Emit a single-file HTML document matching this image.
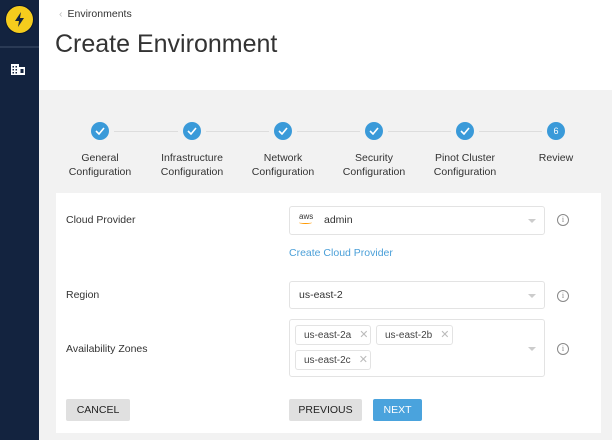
<!DOCTYPE html><html><head><style>
*{box-sizing:border-box;margin:0;padding:0}
body{width:612px;height:440px;overflow:hidden;font-family:"Liberation Sans",sans-serif;background:#f2f2f2;position:relative;color:#222}
.sb{position:absolute;left:0;top:0;width:39px;height:440px;background:#13233f}
.a{position:absolute}
.hd{position:absolute;left:39px;top:0;width:573px;height:90px;background:#fff}
.c{position:absolute;top:122px;width:18px;height:18px;border-radius:50%;background:#3a9ad9;color:#fff;font-size:9px;text-align:center;line-height:18px}
.c svg{position:absolute;left:4px;top:5px}
.ln{position:absolute;top:131px;height:1px;background:#ddd}
.lb{position:absolute;top:151px;width:110px;text-align:center;font-size:10.5px;line-height:14px;color:#333}
.card{position:absolute;left:56px;top:193px;width:545px;height:240px;background:#fff}
.lab{position:absolute;left:66px;font-size:10.5px;color:#333}
.sel{position:absolute;left:289px;width:256px;border:1px solid #e3e3e3;border-radius:3px;background:#fff}
.ar{position:absolute;right:8px;width:0;height:0;border-left:4px solid transparent;border-right:4px solid transparent;border-top:4px solid #ccc}
.i{position:absolute;left:557px;width:12px;height:12px;border:1px solid #888;border-radius:50%;font-size:8px;text-align:center;line-height:10px;color:#888;font-family:"Liberation Serif",serif}
.chip{position:absolute;height:20px;border:1px solid #e3e3e3;border-radius:3px;font-size:10px;line-height:18px;padding-left:8px;color:#444}
.chip span{color:#bbb;margin-left:8px;font-size:11px}
.btn{position:absolute;top:399px;height:22px;font-size:10.5px;line-height:22px;text-align:center;border-radius:2px}
</style></head><body>
<div class="sb"><div class="a" style="left:5px;top:5px;width:29px;height:29px;border-radius:50%;background:#f5cc1d;border:1px solid #0b1730">
<svg width="27" height="27" viewBox="0 0 27 27"><path d="M15 6 L9 15 H13 L12 21 L18 12 H14 Z" fill="#13233f"/></svg></div>
<div class="a" style="left:0;top:46px;width:39px;height:2px;background:#2a3a55"></div>
<svg class="a" style="left:11px;top:64px" width="14" height="11" viewBox="0 0 14 11"><rect x="0" y="0" width="8" height="11" fill="#fff"/><rect x="8" y="3" width="6" height="8" fill="#fff"/><g fill="#13233f"><rect x="1.5" y="2" width="1.5" height="1.5"/><rect x="4.5" y="2" width="1.5" height="1.5"/><rect x="1.5" y="5" width="1.5" height="1.5"/><rect x="4.5" y="5" width="1.5" height="1.5"/><rect x="1.5" y="8" width="1.5" height="1.5"/><rect x="4.5" y="8" width="1.5" height="1.5"/><rect x="9.5" y="5" width="3" height="4"/></g></svg></div>
<div class="hd"></div>
<div class="a" style="left:59px;top:8px;font-size:10.5px;color:#333"><span style="color:#bbb;margin-right:5px">‹</span>Environments</div>
<div class="a" style="left:55px;top:30px;font-size:25px;color:#333">Create Environment</div>
<div class="ln" style="left:114px;width:64px"></div><div class="ln" style="left:206px;width:63px"></div><div class="ln" style="left:297px;width:63px"></div><div class="ln" style="left:388px;width:63px"></div><div class="ln" style="left:479px;width:63px"></div>
<div class="c" style="left:91px"><svg width="10" height="8" viewBox="0 0 10 8"><path d="M1 4 L4 7 L9 1" stroke="#fff" stroke-width="1.6" fill="none"/></svg></div>
<div class="c" style="left:183px"><svg width="10" height="8" viewBox="0 0 10 8"><path d="M1 4 L4 7 L9 1" stroke="#fff" stroke-width="1.6" fill="none"/></svg></div>
<div class="c" style="left:274px"><svg width="10" height="8" viewBox="0 0 10 8"><path d="M1 4 L4 7 L9 1" stroke="#fff" stroke-width="1.6" fill="none"/></svg></div>
<div class="c" style="left:365px"><svg width="10" height="8" viewBox="0 0 10 8"><path d="M1 4 L4 7 L9 1" stroke="#fff" stroke-width="1.6" fill="none"/></svg></div>
<div class="c" style="left:456px"><svg width="10" height="8" viewBox="0 0 10 8"><path d="M1 4 L4 7 L9 1" stroke="#fff" stroke-width="1.6" fill="none"/></svg></div>
<div class="c" style="left:547px">6</div>
<div class="lb" style="left:45px">General<br>Configuration</div><div class="lb" style="left:137px">Infrastructure<br>Configuration</div><div class="lb" style="left:228px">Network<br>Configuration</div><div class="lb" style="left:319px">Security<br>Configuration</div><div class="lb" style="left:410px">Pinot Cluster<br>Configuration</div><div class="lb" style="left:501px">Review</div>
<div class="card"></div>
<div class="lab" style="top:214px">Cloud Provider</div>
<div class="sel" style="top:206px;height:29px"><div class="a" style="left:9px;top:5px;font-size:8px;color:#333">aws<div style="width:13px;height:3px;border-bottom:1px solid #f90;border-radius:0 0 50% 50%"></div></div><div class="a" style="left:34px;top:7px;font-size:10.5px;color:#333">admin</div><div class="ar" style="top:12px"></div></div>
<div class="i" style="top:214px">i</div>
<div class="a" style="left:289px;top:247px;font-size:10.5px;color:#4a9fd8">Create Cloud Provider</div>
<div class="lab" style="top:289px">Region</div>
<div class="sel" style="top:281px;height:28px"><div class="a" style="left:9px;top:7px;font-size:10.5px;color:#333">us-east-2</div><div class="ar" style="top:12px"></div></div>
<div class="i" style="top:290px">i</div>
<div class="lab" style="top:343px">Availability Zones</div>
<div class="sel" style="top:319px;height:58px"><div class="ar" style="top:27px"></div></div>
<div class="chip" style="left:295px;top:325px;width:76px">us-east-2a<span>✕</span></div>
<div class="chip" style="left:376px;top:325px;width:77px">us-east-2b<span>✕</span></div>
<div class="chip" style="left:295px;top:350px;width:76px">us-east-2c<span>✕</span></div>
<div class="i" style="top:343px">i</div>
<div class="btn" style="left:66px;width:64px;background:#e0e0e0;color:#222">CANCEL</div>
<div class="btn" style="left:289px;width:73px;background:#e0e0e0;color:#222">PREVIOUS</div>
<div class="btn" style="left:373px;width:49px;background:#4aa3dd;color:#fff">NEXT</div>
</body></html>
